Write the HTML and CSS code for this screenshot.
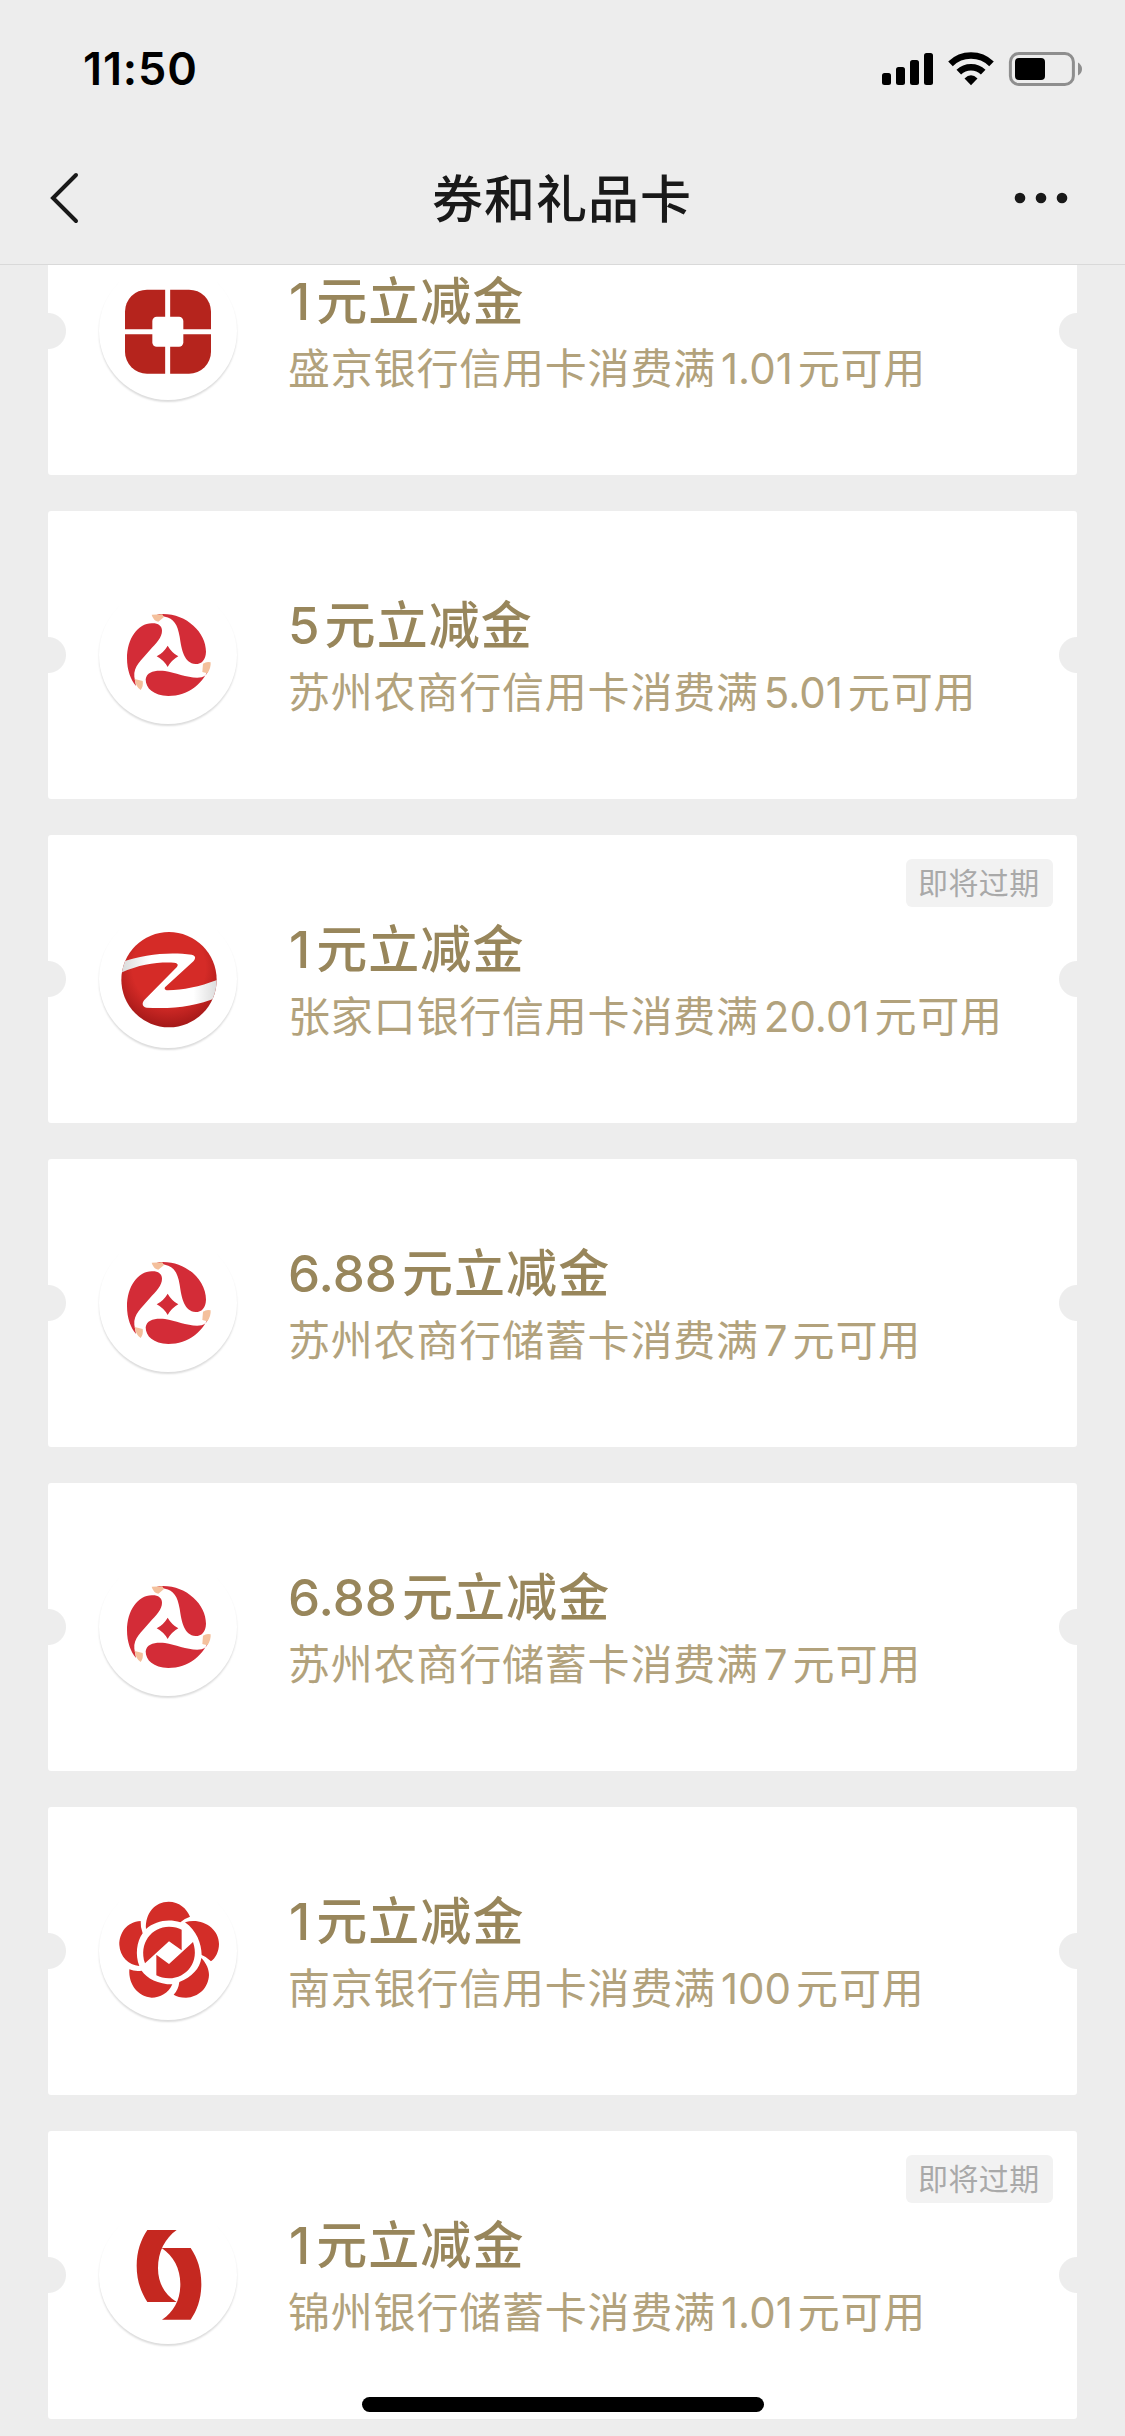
FILE: index.html
```html
<!DOCTYPE html>
<html lang="zh-CN">
<head>
    <meta charset="UTF-8">
    <meta name="viewport" content="width=device-width, initial-scale=1.0">
    <title>券和礼品卡</title>
    <link rel="stylesheet" href="styles.css">
</head>
<body>
    <!-- Bank logos, reused by the cards -->
    <svg class="sprite" width="0" height="0">
        <symbol id="logo-shengjing" viewBox="207 21 414 414">
            <rect x="285" y="104" width="258" height="252" rx="66" fill="#b5241d"/>
            <path d="M413 100V360M281 230H547" stroke="#fff" stroke-width="15"/>
            <rect x="367" y="185" width="93" height="90" rx="13" fill="#fff"/>
        </symbol>
        <symbol id="logo-suzhou" viewBox="207 78 414 414">
            <g fill="#d32c37">
                <path d="M368 190C325 188 291 235 291 295C291 330 302 360 318 378L313 350C310 318 335 300 358 272C380 248 396 232 396 212C396 198 385 190 368 190Z"/>
                <path d="M380 163C460 152 528 212 528 275C527 300 515 312 497 312C462 309 455 270 449 230C443 193 430 174 405 170Z"/>
                <path d="M540 312C525 370 475 408 415 408C370 407 347 385 347 358C350 335 375 330 405 333C440 338 480 358 515 352C526 348 532 342 535 330Z"/>
                <path d="M413 257Q425 278 445 289Q425 300 413 321Q401 300 380 289Q401 278 413 257Z"/>
            </g>
            <g fill="#f4c09c">
                <path d="M365 164L397 163L402 171L385 185Q370 182 365 164Z"/>
                <path d="M519 311Q530 303 542 307Q543 325 532 340L517 336Z"/>
                <path d="M314 357L338 363Q341 378 332 390Q318 382 314 357Z"/>
            </g>
        </symbol>
        <symbol id="logo-zhangjiakou" viewBox="207 90 414 414">
            <radialGradient id="ball" cx="0.5" cy="0.38" r="0.64">
                <stop offset="0.6" stop-color="#d52b27"/>
                <stop offset="1" stop-color="#a01717"/>
            </radialGradient>
            <linearGradient id="band" x1="0" x2="1">
                <stop offset="0" stop-color="#d8d8d8"/>
                <stop offset="0.3" stop-color="#fff"/>
                <stop offset="0.75" stop-color="#fff"/>
                <stop offset="1" stop-color="#dadada"/>
            </linearGradient>
            <clipPath id="ball-clip"><circle cx="417" cy="299" r="143"/></clipPath>
            <circle cx="417" cy="299" r="143" fill="url(#ball)"/>
            <path clip-path="url(#ball-clip)" fill="url(#band)" d="M270 249C340 221 420 216 485 224C497 226 498 235 491 243L405 322Q401 331 414 331C460 330 510 320 564 299V351C500 378 430 388 350 383C336 380 335 370 343 360L440 262Q449 250 432 248C380 246 330 252 270 280Z"/>
        </symbol>
        <symbol id="logo-nanjing" viewBox="207 66 414 414">
            <g fill="#d32d28">
                <path d="M348 207C345 160 375 125 416 125C447 125 470 145 480 170Q464 175 451 187C415 175 375 183 348 207Z"/>
                <path d="M465 187C515 172 567 205 567 252C567 275 556 295 543 304Q530 290 515 285C514 250 500 212 465 187Z"/>
                <path d="M514 294C530 310 537 330 537 345C535 385 505 412 468 413C452 413 440 410 431 404Q445 390 448 366C485 352 510 325 514 294Z"/>
                <path d="M298 328Q315 335 335 332C350 355 385 373 427 373C415 400 390 413 365 413C325 410 295 375 298 328Z"/>
                <path d="M332 183C290 185 267 220 268 255C270 290 295 315 328 318C315 285 320 245 338 220Q331 200 332 183Z"/>
                <path d="M345 310C325 250 365 200 417 200Q440 200 455 209V271L417 244Z"/>
                <path d="M489 246C510 305 470 355 417 355Q395 355 379 346V284L417 312Z"/>
            </g>
        </symbol>
        <symbol id="logo-jinzhou" viewBox="207 78 414 414">
            <g fill="#c52820">
                <path d="M352 150H440C405 175 384 215 384 265C384 310 405 345 440 366H352C332 335 320 300 320 257C320 215 332 180 352 150Z"/>
                <path d="M395 204H482C503 235 514 270 514 312C514 355 502 390 482 419H396C432 395 451 360 451 312C451 265 430 228 395 204Z"/>
            </g>
        </symbol>
    </svg>

    <header class="header">
        <div class="status-bar">
            <span class="time">11:50</span>
            <svg class="status-icons" width="202" height="36" viewBox="881 51 202 36">
                <rect x="882" y="73" width="9" height="12" rx="2.5"/>
                <rect x="896" y="67" width="9" height="18" rx="2.5"/>
                <rect x="910" y="60" width="9" height="25" rx="2.5"/>
                <rect x="924" y="53" width="9" height="32" rx="2.5"/>
                <path d="M950.5 63.8A29.5 29.5 0 0 1 991.5 63.8M958.8 72.2A17.5 17.5 0 0 1 983.2 72.2" fill="none" stroke="#000" stroke-width="6.6"/>
                <path d="M964.5 78.5Q971 72 977.5 78.5L971 85.2Z"/>
                <rect x="1010.4" y="53.5" width="63" height="31" rx="8.5" fill="none" stroke="#8e8e8e" stroke-width="3"/>
                <rect x="1015" y="58" width="30" height="22" rx="4"/>
                <path d="M1078 62.5Q1082 65 1082 69T1078 75.5Z" fill="#8e8e8e"/>
            </svg>
        </div>
        <nav class="nav-bar">
            <svg class="back" width="30" height="54" viewBox="0 0 30 54">
                <path d="M27 4L4 27L27 50" fill="none" stroke="#191919" stroke-width="4" stroke-linecap="round"/>
            </svg>
            <h1>券和礼品卡</h1>
            <svg class="more" width="54" height="12" viewBox="0 0 54 12">
                <circle cx="6" cy="6" r="5.3"/>
                <circle cx="27" cy="6" r="5.3"/>
                <circle cx="48" cy="6" r="5.3"/>
            </svg>
        </nav>
    </header>

    <main class="coupon-list">
        <div class="coupon">
            <svg class="logo"><use href="#logo-shengjing"/></svg>
            <div class="info">
                <h2><span class="num one">1</span>元立减金</h2>
                <p>盛京银行信用卡消费满<span class="num">1.01</span>元可用</p>
            </div>
        </div>
        <div class="coupon">
            <svg class="logo"><use href="#logo-suzhou"/></svg>
            <div class="info">
                <h2><span class="num">5</span>元立减金</h2>
                <p>苏州农商行信用卡消费满<span class="num">5.01</span>元可用</p>
            </div>
        </div>
        <div class="coupon">
            <span class="badge">即将过期</span>
            <svg class="logo"><use href="#logo-zhangjiakou"/></svg>
            <div class="info">
                <h2><span class="num one">1</span>元立减金</h2>
                <p>张家口银行信用卡消费满<span class="num">20.01</span>元可用</p>
            </div>
        </div>
        <div class="coupon">
            <svg class="logo"><use href="#logo-suzhou"/></svg>
            <div class="info">
                <h2><span class="num">6.88</span>元立减金</h2>
                <p>苏州农商行储蓄卡消费满<span class="num">7</span>元可用</p>
            </div>
        </div>
        <div class="coupon">
            <svg class="logo"><use href="#logo-suzhou"/></svg>
            <div class="info">
                <h2><span class="num">6.88</span>元立减金</h2>
                <p>苏州农商行储蓄卡消费满<span class="num">7</span>元可用</p>
            </div>
        </div>
        <div class="coupon">
            <svg class="logo"><use href="#logo-nanjing"/></svg>
            <div class="info">
                <h2><span class="num one">1</span>元立减金</h2>
                <p>南京银行信用卡消费满<span class="num">100</span>元可用</p>
            </div>
        </div>
        <div class="coupon">
            <span class="badge">即将过期</span>
            <svg class="logo"><use href="#logo-jinzhou"/></svg>
            <div class="info">
                <h2><span class="num one">1</span>元立减金</h2>
                <p>锦州银行储蓄卡消费满<span class="num">1.01</span>元可用</p>
            </div>
        </div>
    </main>

    <div class="home-indicator"></div>
</body>
</html>
```

FILE: styles.css
```css
* {
    box-sizing: border-box;
    margin: 0;
    padding: 0;
}

body {
    display: flex;
    flex-direction: column;
    height: 2436px;
    overflow: hidden;
    background: #ededed;
    font-family: Inter, "Noto Sans CJK SC", sans-serif;
}

.sprite {
    position: absolute;
}

/* Status bar and navigation */
.header {
    flex: none;
    height: 265px;
    border-bottom: 1px solid #d9d9d9;
}

.status-bar {
    display: flex;
    justify-content: space-between;
    align-items: center;
    height: 138px;
    padding: 0 42px 0 83px;
}

.time {
    font-size: 45px;
    font-weight: 600;
    line-height: 54px;
    letter-spacing: 0.9px;
}

.nav-bar {
    display: grid;
    grid-template-columns: 54px 1fr 54px;
    align-items: center;
    height: 120px;
    padding: 0 57px 0 49px;
}

.nav-bar h1 {
    padding: 3px 0 0 7px;
    color: #191919;
    font-size: 51px;
    font-weight: 500;
    line-height: 72px;
    letter-spacing: 1px;
    text-align: center;
}

.more {
    fill: #191919;
}

/* Coupons */
.coupon-list {
    flex: 1;
    overflow: hidden;
    padding: 0 48px;
}

.coupon {
    position: relative;
    display: flex;
    align-items: center;
    height: 288px;
    margin-bottom: 36px;
    padding-left: 51px;
    border-radius: 3px;
    background:
        radial-gradient(circle at 0 50%, #ededed 17.5px, transparent 18.5px),
        radial-gradient(circle at 100% 50%, #ededed 17.5px, transparent 18.5px),
        #fff;
}

/* the list is scrolled, the first card runs under the header */
.coupon:first-child {
    margin-top: -78px;
}

.logo {
    width: 138px;
    height: 138px;
    margin-right: 51px;
    border-radius: 50%;
    box-shadow: 0 2px 2px rgba(0, 0, 0, 0.14);
}

.info {
    padding-top: 2px;
    white-space: nowrap;
}

.info h2 {
    color: #98865b;
    font-size: 51px;
    font-weight: 500;
    line-height: 72px;
    letter-spacing: 1.1px;
}

.info p {
    padding-top: 1px;
    color: #b2a27c;
    font-size: 42px;
    line-height: 60px;
    letter-spacing: 0.8px;
}

.num {
    margin-right: 5px;
    letter-spacing: 0;
}

.num.one {
    margin: 0 6px 0 1px;
}

.info p .num {
    margin: 0 5px;
}

.badge {
    position: absolute;
    top: 24px;
    right: 24px;
    width: 147px;
    height: 48px;
    padding-left: 12px;
    border-radius: 6px;
    background: #f2f2f2;
    color: #a9a9a9;
    font-size: 30px;
    line-height: 48px;
    letter-spacing: 0.4px;
}

.home-indicator {
    position: absolute;
    left: 362px;
    bottom: 24px;
    width: 402px;
    height: 15px;
    border-radius: 8px;
    background: #000;
}
```
